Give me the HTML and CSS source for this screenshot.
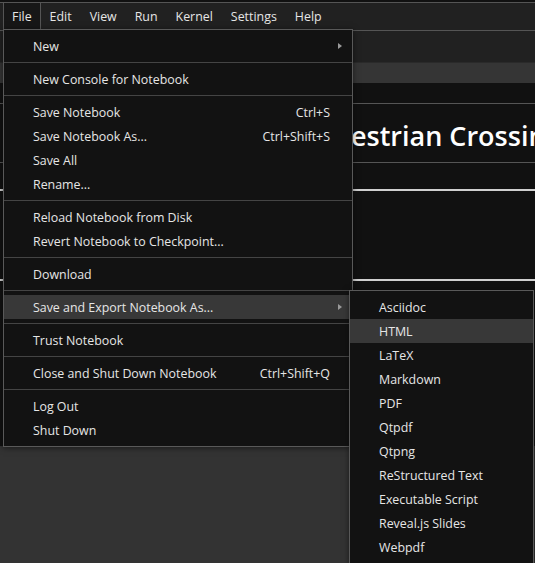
FILE: index.html
```html
<!DOCTYPE html>
<html lang="en">

<head>
    <meta charset="UTF-8">
    <meta name="viewport" content="width=device-width, initial-scale=1.0">
    <link rel="stylesheet" href="styles.css">
</head>

<body>

    <div class="app">
        <div class="menubar">
            <div class="menubar-item active">File</div>
            <div class="menubar-item">Edit</div>
            <div class="menubar-item">View</div>
            <div class="menubar-item">Run</div>
            <div class="menubar-item">Kernel</div>
            <div class="menubar-item">Settings</div>
            <div class="menubar-item">Help</div>
        </div>
        <div class="toolbar"></div>
        <div class="tabbar"></div>

        <div class="notebook">
            <div class="heading-cell">
                <h1>Pedestrian Crossing Detection</h1>
            </div>
            <hr class="rule">
            <div class="blank-cell"></div>
            <hr class="rule">
        </div>
        <div class="filler"></div>

        <div class="menu file-menu">
            <div class="menu-item"><span class="label">New</span><span class="submark"><i class="arrow"></i></span></div>
            <div class="menu-sep"></div>
            <div class="menu-item"><span class="label">New Console for Notebook</span></div>
            <div class="menu-sep"></div>
            <div class="menu-item"><span class="label">Save Notebook</span><span class="shortcut">Ctrl+S</span></div>
            <div class="menu-item"><span class="label">Save Notebook As...</span><span class="shortcut">Ctrl+Shift+S</span></div>
            <div class="menu-item"><span class="label">Save All</span></div>
            <div class="menu-item"><span class="label">Rename...</span></div>
            <div class="menu-sep"></div>
            <div class="menu-item"><span class="label">Reload Notebook from Disk</span></div>
            <div class="menu-item"><span class="label">Revert Notebook to Checkpoint...</span></div>
            <div class="menu-sep"></div>
            <div class="menu-item"><span class="label">Download</span></div>
            <div class="menu-sep"></div>
            <div class="menu-item active"><span class="label">Save and Export Notebook As...</span><span class="submark"><i class="arrow"></i></span></div>
            <div class="menu-sep"></div>
            <div class="menu-item"><span class="label">Trust Notebook</span></div>
            <div class="menu-sep"></div>
            <div class="menu-item"><span class="label">Close and Shut Down Notebook</span><span class="shortcut">Ctrl+Shift+Q</span></div>
            <div class="menu-sep"></div>
            <div class="menu-item"><span class="label">Log Out</span></div>
            <div class="menu-item"><span class="label">Shut Down</span></div>
        </div>

        <div class="menu export-menu">
            <div class="menu-item"><span class="label">Asciidoc</span></div>
            <div class="menu-item active"><span class="label">HTML</span></div>
            <div class="menu-item"><span class="label">LaTeX</span></div>
            <div class="menu-item"><span class="label">Markdown</span></div>
            <div class="menu-item"><span class="label">PDF</span></div>
            <div class="menu-item"><span class="label">Qtpdf</span></div>
            <div class="menu-item"><span class="label">Qtpng</span></div>
            <div class="menu-item"><span class="label">ReStructured Text</span></div>
            <div class="menu-item"><span class="label">Executable Script</span></div>
            <div class="menu-item"><span class="label">Reveal.js Slides</span></div>
            <div class="menu-item"><span class="label">Webpdf</span></div>
        </div>
    </div>

</body>

</html>
```

FILE: styles.css
```css
body {
    margin: 0;
    padding: 0;
    background-color: #111;
    color: #e6e6e6;
    font-family: "Open Sans", "Noto Sans", sans-serif;
    font-size: 12.4px;
    overflow: hidden;
}

.app {
    position: relative;
    height: 563px;
    display: flex;
    flex-direction: column;
    overflow: hidden;
}

.menubar {
    margin-top: 2px;
    height: 27px;
    border-top: 1px solid #555;
    border-bottom: 1px solid #555;
    background-color: #212121;
    display: flex;
    padding-left: 3px;
}

.menubar-item {
    padding: 0 8px;
    line-height: 27px;
    border-left: 1px solid transparent;
    border-right: 1px solid transparent;
}

.menubar-item.active {
    background-color: #171717;
    border-color: #555;
}

.toolbar {
    height: 31px;
    background-color: #212121;
}

.tabbar {
    height: 20px;
    border-top: 1px solid #2a2a2a;
    background-color: #353535;
}

.notebook {
    height: 343px;
    padding-top: 20px;
    background-color: #111;
    overflow: hidden;
}

.heading-cell {
    border-top: 1px solid #555;
    border-bottom: 1px solid #555;
    height: 58px;
    overflow: hidden;
}

.heading-cell h1 {
    margin: 0;
    padding: 6px 0 0 302px;
    line-height: 52px;
    font-size: 27px;
    font-weight: 600;
    color: #fff;
    white-space: nowrap;
}

.rule {
    margin: 26px 0 0;
    border: none;
    height: 2px;
    background-color: #d0d0d0;
}

.blank-cell {
    height: 0;
}

.rule + .blank-cell + .rule {
    margin-top: 88px;
}

.filler {
    flex: 1;
    background-color: #333;
}

.menu {
    position: absolute;
    padding: 4px 0;
    border: 1px solid #595959;
    background-color: #121212;
    box-shadow: 0 1px 6px rgba(0, 0, 0, 0.5);
}

.file-menu {
    left: 3px;
    top: 29px;
    width: 348px;
}

.export-menu {
    left: 349px;
    top: 290px;
    width: 183px;
}

.menu-item {
    display: flex;
    align-items: center;
    height: 24px;
    padding-left: 29px;
    padding-right: 22px;
    white-space: nowrap;
}

.menu-item.active {
    background-color: #383838;
}

.menu-item .label {
    flex: 1;
}

.menu-item .submark {
    width: 22px;
    margin-right: -22px;
    padding-left: 8px;
    box-sizing: border-box;
    display: flex;
    align-items: center;
}

.arrow {
    width: 0;
    height: 0;
    border-left: 4px solid #9a9a9a;
    border-top: 3.5px solid transparent;
    border-bottom: 3.5px solid transparent;
}

.menu-sep {
    height: 1px;
    margin: 4px 0;
    background-color: #444;
}
```
